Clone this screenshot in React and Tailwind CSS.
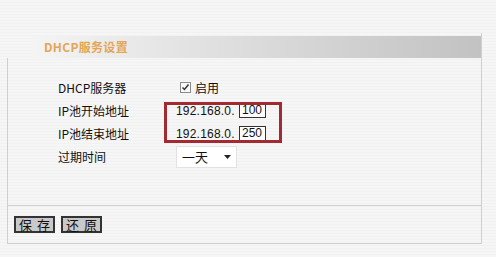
const cjk = "font-['SimSun','Noto_Sans_CJK_SC',sans-serif]";

const Row = ({ label, children }) => (
  <div className="flex items-center h-[23px]">
    <div className="w-[118px] shrink-0 text-[12px] text-[#111]">{label}</div>
    <div className="flex items-center">{children}</div>
  </div>
);

const IpField = ({ value }) => (
  <div className="flex items-center">
    <span className="w-[63px] text-[12px] font-['Liberation_Sans',sans-serif] tracking-[0.2px] text-[#111] whitespace-nowrap">
      192.168.0.
    </span>
    <div className="w-[27px] h-[15px] border border-[#333] bg-white text-[12px] leading-[13px] pl-[2px] font-['Liberation_Sans',sans-serif] text-[#111]">
      {value}
    </div>
  </div>
);

const Btn = ({ a, b }) => (
  <button className="w-[41px] h-[17px] border-2 border-[#333] bg-[#c9c9c9] flex items-center justify-center gap-[5px] whitespace-nowrap text-[13px] leading-[13px] text-[#111]">
    <span>{a}</span>
    <span>{b}</span>
  </button>
);

const App = () => {
  return (
    <div
      className={`w-[496px] h-[257px] overflow-hidden bg-[#f4f4f4] bg-[repeating-linear-gradient(to_bottom,#f6f6f6_0px,#f6f6f6_2px,#ececec_3px)] pt-[33px] ${cjk}`}
    >
      <div className="ml-[7px] w-[475px] border-r border-[#cfcfcf]">
        <div className="pt-[3px] pl-[25px]">
          <div className="h-[22px] flex items-center pl-[12px] bg-[linear-gradient(to_right,#f4f4f4,#c2c2c2)]">
            <span className="text-[12px] font-bold text-[#e3a654] tracking-[0.3px]">
              DHCP服务设置
            </span>
          </div>
        </div>
        <div className="relative border-l border-b border-[#cfcfcf] h-[186px]">
          <div className="pl-[50px] pt-[18px]">
            <Row label="DHCP服务器">
              <div className="flex items-center ml-[4px]">
                <div className="w-[11px] h-[11px] border border-[#8a8a8a] bg-[#f8f8f8] flex items-center justify-center">
                  <svg width="9" height="9" viewBox="0 0 9 9">
                    <path d="M1.5 4.5 L3.5 6.5 L7.5 1.5" fill="none" stroke="#333" strokeWidth="1.5" />
                  </svg>
                </div>
                <span className="ml-[4px] text-[12px] text-[#111]">启用</span>
              </div>
            </Row>
            <Row label="IP池开始地址">
              <IpField value="100" />
            </Row>
            <Row label="IP池结束地址">
              <IpField value="250" />
            </Row>
            <Row label="过期时间">
              <div className="w-[61px] h-[22px] mt-[1px] border border-[#e2e2e2] bg-white flex items-center justify-between px-[5px]">
                <span className="text-[13px] text-[#111]">一天</span>
                <svg width="7" height="4" viewBox="0 0 7 4">
                  <path d="M0 0 H7 L3.5 4 Z" fill="#222" />
                </svg>
              </div>
            </Row>
          </div>

          <div className="absolute left-[156px] top-[44px] w-[118px] h-[41px] border-[3px] border-[#a32a30] pointer-events-none" />

          <div className="absolute left-0 right-0 top-[147px] border-t border-[#cfcfcf]" />

          <div className="absolute left-[6px] top-[158px] flex gap-[6px]">
            <Btn a="保" b="存" />
            <Btn a="还" b="原" />
          </div>
        </div>
      </div>
    </div>
  );
};

export default App;
